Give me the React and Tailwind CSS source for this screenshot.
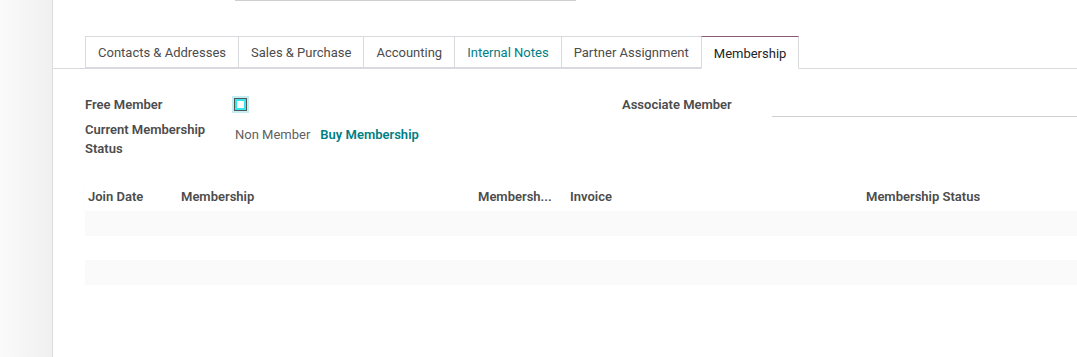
import React from 'react'

const tabs = ['Contacts & Addresses', 'Sales & Purchase', 'Accounting', 'Internal Notes', 'Partner Assignment', 'Membership']

const columns = [
  { label: 'Join Date', w: 'w-[93px]' },
  { label: 'Membership', w: 'w-[297px]' },
  { label: 'Membersh...', w: 'w-[92px]' },
  { label: 'Invoice', w: 'w-[296px]' },
  { label: 'Membership Status', w: 'flex-1' },
]

export default function App() {
  return (
    <div className="flex h-[357px] w-[1077px] overflow-hidden bg-white text-[13px] text-[#4c4c4c]" style={{ fontFamily: 'Roboto, "Noto Sans", sans-serif' }}>
      <div className="w-[53px] shrink-0 bg-gradient-to-r from-[#fafafa] to-[#f0f0f0] border-r border-[#dcdcdc]" />

      <div className="flex-1 flex flex-col">
        <div className="h-[36px]">
          <div className="ml-[182px] w-[341px] h-[1px] bg-[#cfcfcf]" />
        </div>

        <div className="flex pl-[32px] border-b border-[#d8dadd]">
          {tabs.map((t) => {
            const active = t === 'Membership'
            return (
              <div
                key={t}
                className={
                  active
                    ? 'px-[12px] pt-[2px] h-[33px] flex items-center border border-[#d8dadd] border-t-[#875a7b] bg-white -mb-[1px] border-b-white text-[#212529]'
                    : `px-[12px] pt-[2px] h-[32px] flex items-center border border-[#d8dadd] -mr-[1px] ${t === 'Internal Notes' ? 'text-[#017e84]' : 'text-[#4c4c4c]'}`
                }
              >
                {t}
              </div>
            )
          })}
        </div>

        <div className="flex pl-[32px] pt-[26px]">
          <div className="w-[537px] flex flex-col">
            <div className="flex items-start h-[20px]">
              <div className="w-[149px] font-semibold leading-[20px]">Free Member</div>
              <div className="mt-[3px] w-[13px] h-[13px] border border-[#555] shadow-[inset_0_0_0_2px_#35e6ef] ring-2 ring-[#c4eef2] bg-white" />
            </div>
            <div className="flex mt-[5px]">
              <div className="w-[150px] font-semibold leading-[19px]">Current Membership<br />Status</div>
              <div className="flex gap-[10px] pt-[7px] leading-[15px]">
                <span className="text-[#5f5f5f]">Non Member</span>
                <span className="font-semibold text-[#017e84]">Buy Membership</span>
              </div>
            </div>
          </div>
          <div className="flex-1 flex items-start">
            <div className="w-[150px] font-semibold leading-[20px]">Associate Member</div>
            <div className="flex-1 h-[22px] border-b border-[#cfcfcf]" />
          </div>
        </div>

        <div className="ml-[32px] mt-[24px]">
          <div className="flex h-[29px] items-center font-semibold shadow-[0_2px_2px_rgba(0,0,0,0.03)]">
            {columns.map((c) => (
              <div key={c.label} className={`${c.w} pl-[3px]`}>{c.label}</div>
            ))}
          </div>
          <div className="h-[25px] bg-[#fafafa]" />
          <div className="h-[24px] bg-white" />
          <div className="h-[25px] bg-[#fafafa]" />
        </div>
      </div>
    </div>
  )
}
